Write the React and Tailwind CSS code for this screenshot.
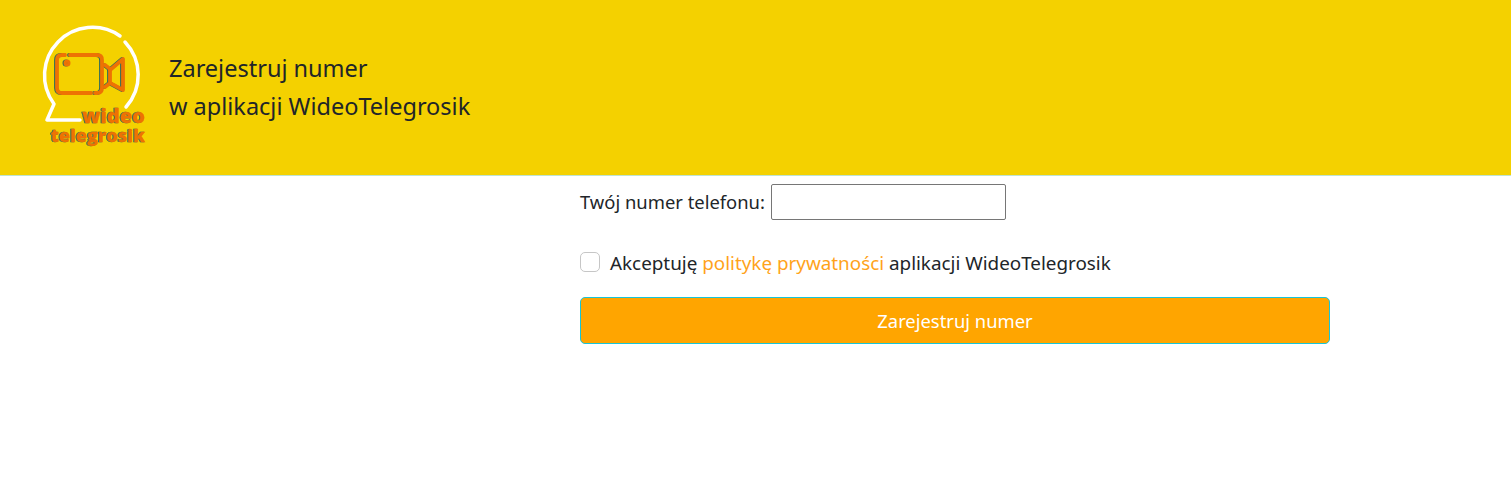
const Logo = () => (
  <svg width="106" height="128" viewBox="0 0 106 128" className="shrink-0">
    {/* speech bubble */}
    <path d="M79 12 A48 48 0 0 0 13 80 L6 96 L39 96" fill="none" stroke="#fff" strokeWidth="3.5" strokeLinecap="round" strokeLinejoin="round" />
    <path d="M84 18 A48 48 0 0 1 85 83" fill="none" stroke="#fff" strokeWidth="3.5" strokeLinecap="round" />
    {/* camera */}
    <g fill="none" stroke="#ee7203" strokeWidth="3.8" strokeLinecap="round" strokeLinejoin="round" className="[filter:drop-shadow(-0.7px_0.7px_0_#2f6a5a)]">
      <path d="M24 31 H21 Q16 31 16 36 V64 Q16 69 21 69 H50" />
      <path d="M29 31 H56 Q61 31 61 36 V64 Q61 69 56 69 H54" />
      <path d="M64 41 L69 45 V59 L64 63" />
      <path d="M69 46 L82 35 V66 L69 59" />
      <circle cx="26" cy="39" r="1.6" />
    </g>
    <g fill="#ee7203" stroke="#ee7203" strokeWidth="0.3" className="font-['Open_Sans',sans-serif] font-extrabold [filter:drop-shadow(-0.5px_0.5px_0_#2f6a5a)]">
      <text x="104" y="98.5" textAnchor="end" className="text-[20px]">wideo</text>
      <text x="104" y="118" textAnchor="end" className="text-[18px]">telegrosik</text>
    </g>
  </svg>
);

export default function App() {
  return (
    <div className="min-h-[486px] bg-white font-['Noto_Sans',sans-serif] text-[18.4px] text-[#212529]">
      <header className="flex h-[176px] items-center border-b border-[#bfe3d0] bg-[#f4d100] pl-[41px]">
        <Logo />
        <h1 className="mb-[2px] ml-[22px] text-[23.5px] leading-[38px] font-normal">
          Zarejestruj numer
          <br />
          w aplikacji WideoTelegrosik
        </h1>
      </header>

      <form className="mt-2 ml-[580px] w-[750px]">
        <div className="flex items-center">
          <label className="mr-[6px]">Twój numer telefonu:</label>
          <input type="text" className="h-[36px] w-[235px] rounded-[2px] border border-[#767676] bg-white" />
        </div>

        <div className="mt-8 flex h-5 items-center">
          <input type="checkbox" className="h-5 w-5 appearance-none rounded-[5px] border border-[#c6c6c6] bg-white" />
          <span className="mt-[2px] ml-[10px] text-[18.85px]">
            Akceptuję <a href="#" className="text-[#ffa31a]">politykę prywatności</a> aplikacji WideoTelegrosik
          </span>
        </div>

        <button type="button" className="mt-[25px] h-[47px] w-full rounded-[5px] border border-[#17c5d8] bg-[#ffa500] text-white">
          Zarejestruj numer
        </button>
      </form>
    </div>
  );
}
